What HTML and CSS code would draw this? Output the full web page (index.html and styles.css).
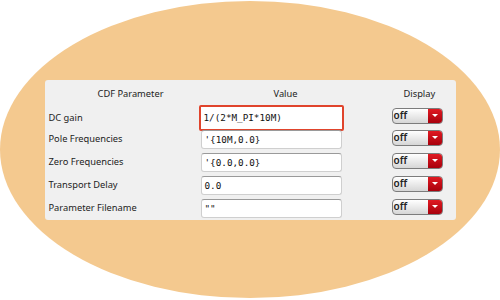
FILE: index.html
```html
<!DOCTYPE html>
<html lang="en">
<head>
    <meta charset="UTF-8">
    <meta name="viewport" content="width=device-width, initial-scale=1.0">
    <title>CDF Parameters</title>
    <link rel="stylesheet" href="styles.css">
</head>
<body>
    <div class="ellipse">
        <div class="panel">
            <div class="row head">
                <div class="h-param">CDF Parameter</div>
                <div class="h-value">Value</div>
                <div class="h-display">Display</div>
            </div>

            <div class="row">
                <div class="label">DC gain</div>
                <div class="value active">1/(2*M_PI*10M)</div>
                <div class="select"><span>off</span><i></i></div>
            </div>
            <div class="row">
                <div class="label">Pole Frequencies</div>
                <div class="value">'{10M,0.0}</div>
                <div class="select"><span>off</span><i></i></div>
            </div>
            <div class="row">
                <div class="label">Zero Frequencies</div>
                <div class="value">'{0.0,0.0}</div>
                <div class="select"><span>off</span><i></i></div>
            </div>
            <div class="row">
                <div class="label">Transport Delay</div>
                <div class="value">0.0</div>
                <div class="select"><span>off</span><i></i></div>
            </div>
            <div class="row">
                <div class="label">Parameter Filename</div>
                <div class="value">""</div>
                <div class="select"><span>off</span><i></i></div>
            </div>
        </div>
    </div>
</body>
</html>
```

FILE: styles.css
```css
* {
    margin: 0;
    padding: 0;
    box-sizing: border-box;
}

body {
    background-color: #fff;
    font-family: "Noto Sans", sans-serif;
    color: #222;
}

.ellipse {
    width: 500px;
    height: 297px;
    margin-top: 1px;
    border-radius: 50%;
    background-color: #f4c98f;
    display: flex;
    align-items: center;
    justify-content: center;
}

.panel {
    width: 411px;
    height: 140px;
    background-color: #f0f0f0;
    border-radius: 3px;
    padding: 0 4px;
    overflow: hidden;
}

.row {
    display: grid;
    grid-template-columns: 150px 145px 1fr;
    align-items: center;
    height: 23px;
}

.row.head {
    height: 25px;
    font-size: 9.3px;
    color: #222;
    padding-top: 2px;
}

.h-param {
    padding-left: 49px;
}

.h-value {
    padding-left: 75px;
}

.h-display {
    padding-left: 60px;
}

.label {
    font-size: 9.3px;
    margin-bottom: 1px;
}

.value {
    height: 19px;
    margin-left: 2px;
    width: 141px;
    background-color: #fff;
    border: 1px solid #cfcfcf;
    border-top-color: #9a9a9a;
    border-radius: 3px;
    padding-left: 3px;
    font-family: "DejaVu Sans Mono", monospace;
    font-size: 9.3px;
    line-height: 17px;
    color: #111;
}

.value.active {
    height: 26px;
    width: 145px;
    margin-left: 0;
    border: 2px solid #e0442c;
    border-radius: 2px;
    padding-left: 3px;
    line-height: 22px;
}

.select {
    margin-left: 48px;
    width: 51px;
    height: 16px;
    margin-bottom: 3px;
    display: flex;
    border: 1px solid #7c7c7c;
    border-radius: 4px;
    overflow: hidden;
    background: linear-gradient(#ffffff, #d6d6d6);
}

.select span {
    flex: 1;
    font-size: 10px;
    font-weight: 600;
    line-height: 13px;
    padding-left: 1px;
    color: #222;
}

.select i {
    width: 14px;
    background: linear-gradient(#e01a22, #a8000c);
    position: relative;
}

.select i::after {
    content: "";
    position: absolute;
    left: 4px;
    top: 5px;
    border-left: 3px solid transparent;
    border-right: 3px solid transparent;
    border-top: 3px solid #fff;
}
```
